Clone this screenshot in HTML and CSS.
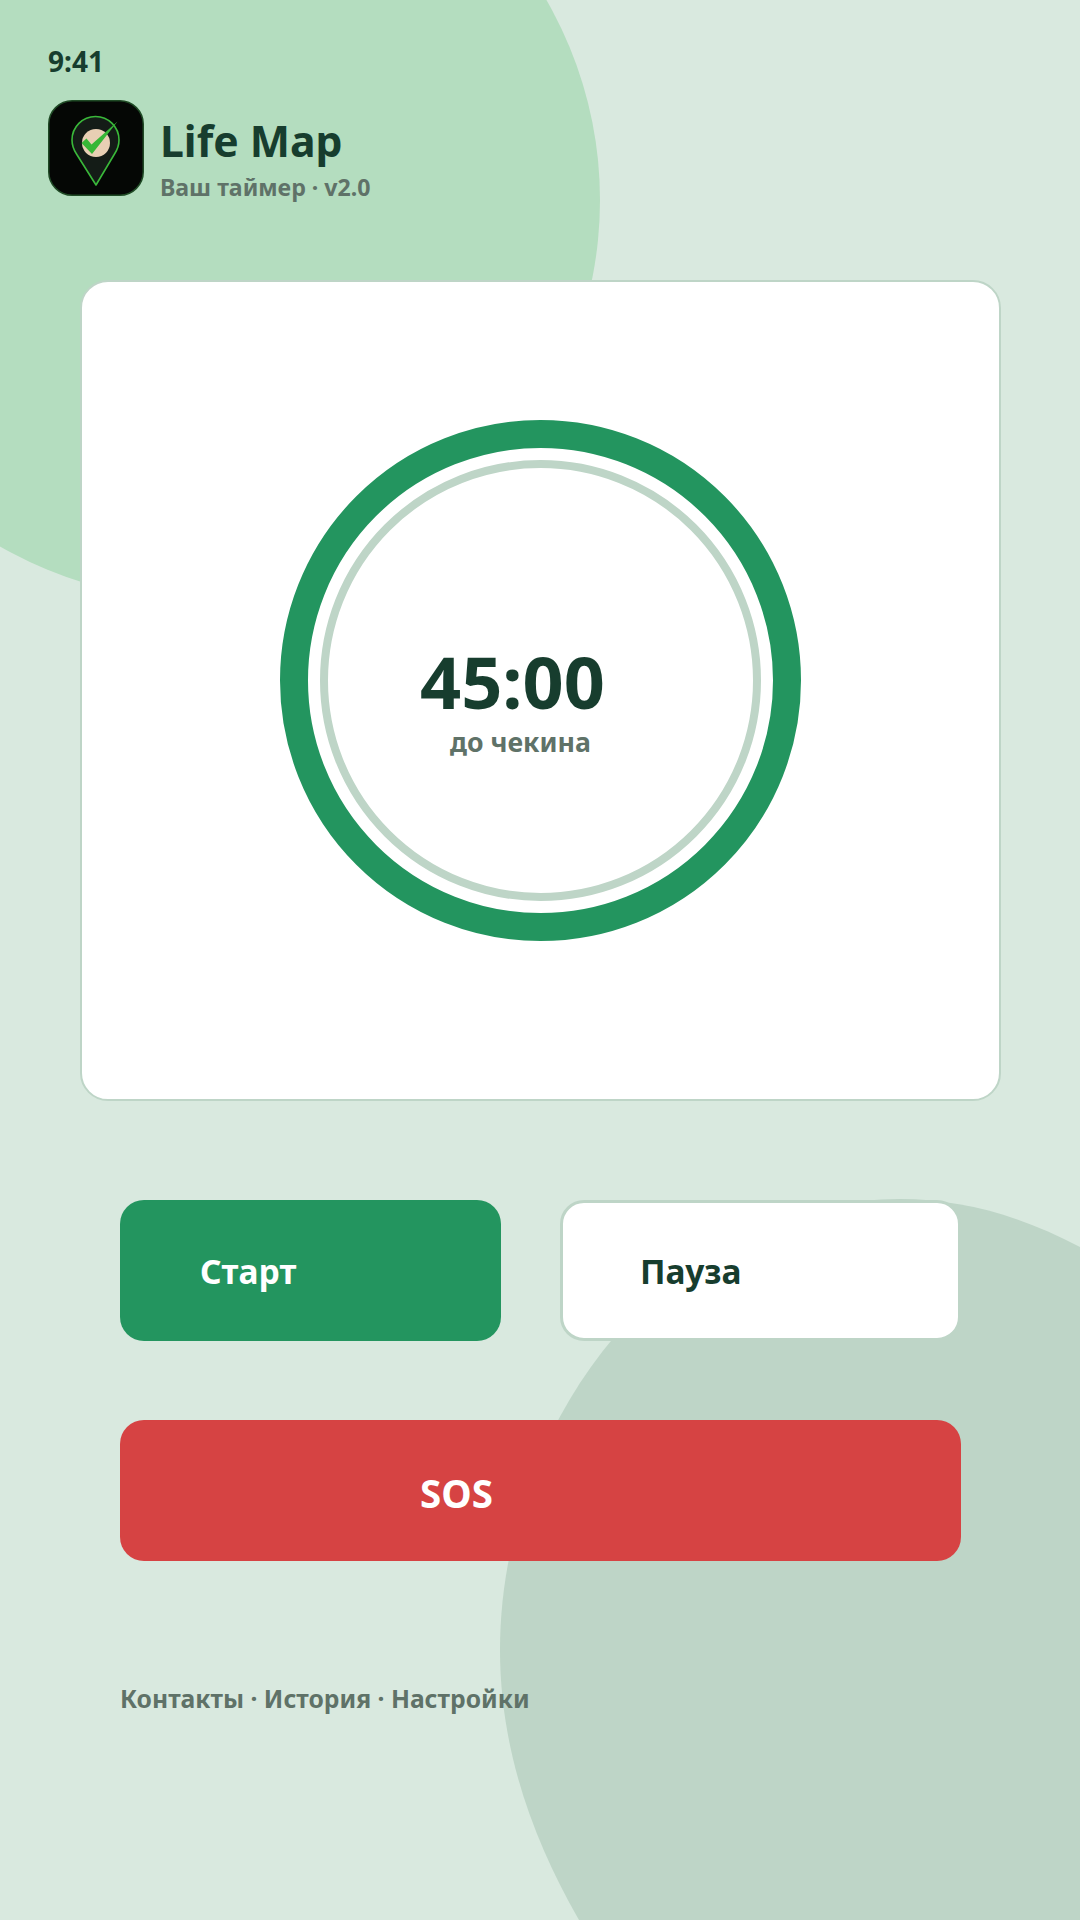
FILE: index.html
```html
<!DOCTYPE html>
<html lang="ru">
<head>
<meta charset="utf-8">
<title>Life Map</title>
<link rel="stylesheet" href="styles.css">
</head>
<body>
<main class="screen">
  <svg class="backdrop" width="1080" height="1920" viewBox="0 0 1080 1920" aria-hidden="true">
    <circle class="blob-top" cx="200" cy="200" r="400"/>
    <path class="blob-bottom" d="M579 1920C530 1835 500 1745 500 1650C500 1430 660 1199 900 1199C960 1199 1020 1215 1080 1247V1920Z"/>
  </svg>

  <div class="status">9:41</div>

  <header class="header">
    <svg class="logo" width="96" height="96" viewBox="0 0 96 96" aria-label="Life Map">
      <rect class="logo-bg" x="0.75" y="0.75" width="94.5" height="94.5" rx="23.5"/>
      <path class="logo-pin" d="M48 85L28.500 54C25.500 49.500 24 45 24 40C24 27 34.500 16.500 47.500 16.500C60.500 16.500 71 27 71 40C71 45 69.500 49.500 66.500 54Z"/>
      <circle class="logo-face" cx="48" cy="43" r="14"/>
      <path class="logo-check" d="M33.500 43L38.500 38.500L43.500 44.500L69.500 21.500L44 54Z"/>
    </svg>
    <div class="brand">
      <h1 class="brand-name">Life Map</h1>
      <p class="brand-sub">Ваш таймер · v2.0</p>
    </div>
  </header>

  <section class="card">
    <div class="dial">
      <svg class="ring" width="521" height="521" viewBox="0 0 521 521" aria-hidden="true">
        <circle class="ring-outer" cx="260.500" cy="260.500" r="246.500"/>
        <circle class="ring-inner" cx="260.500" cy="260.500" r="216.500"/>
      </svg>
      <div class="readout">
        <div class="time">45:00</div>
        <div class="caption">до чекина</div>
      </div>
    </div>
  </section>

  <div class="controls">
    <button class="btn btn-start" type="button">Старт</button>
    <button class="btn btn-pause" type="button">Пауза</button>
  </div>
  <button class="btn btn-sos" type="button">SOS</button>

  <nav class="footer">Контакты · История · Настройки</nav>
</main>
</body>
</html>
```

FILE: styles.css
```css
* { box-sizing: border-box; }

html, body {
  margin: 0;
  padding: 0;
}

body {
  width: 1080px;
  height: 1920px;
  overflow: hidden;
  background: #d9e9df;
  color: #173d2e;
  font-family: "Noto Sans", "Open Sans", sans-serif;
  font-weight: 700;
}

.screen {
  position: relative;
  width: 1080px;
  height: 1920px;
  overflow: hidden;
  display: flex;
  flex-direction: column;
  align-items: flex-start;
}

.backdrop {
  position: absolute;
  left: 0;
  top: 0;
}

.blob-top { fill: #b4ddbf; }
.blob-bottom { fill: #bed5c7; }

.status,
.header,
.card,
.controls,
.btn-sos,
.footer {
  position: relative;
}

.status {
  margin: 43px 0 0 48px;
  height: 37px;
  font-size: 28px;
  line-height: 37px;
}

.header {
  display: flex;
  align-items: flex-start;
  gap: 16px;
  margin: 20px 0 0 48px;
  height: 96px;
}

.logo { display: block; }
.logo-bg { fill: #050705; stroke: #1f4a25; stroke-width: 1.5; }
.logo-pin { fill: #141c17; stroke: #3ab83a; stroke-width: 1.6; stroke-linejoin: round; }
.logo-face { fill: #e8cfb4; }
.logo-check { fill: #37b737; }

.brand {
  padding-top: 15px;
}

.brand-name {
  margin: 0;
  font-size: 42.700px;
  line-height: 52px;
  font-weight: 700;
}

.brand-sub {
  margin: 5px 0 0;
  font-size: 23.150px;
  line-height: 30px;
  color: #5f7268;
}

.card {
  margin: 84px 0 0 80px;
  width: 921px;
  height: 821px;
  padding: 138px 0 0 198px;
  background: #fff;
  border: 2px solid #bed5c7;
  border-radius: 28px;
}

.dial {
  display: grid;
  width: 521px;
  height: 521px;
}

.ring {
  grid-area: 1 / 1;
  display: block;
}

.ring-outer { fill: none; stroke: #23955f; stroke-width: 28; }
.ring-inner { fill: none; stroke: #bed5c7; stroke-width: 8; }

.readout {
  grid-area: 1 / 1;
  padding: 217px 0 0 140px;
}

.time {
  font-size: 72px;
  line-height: 88px;
}

.caption {
  margin: 0 0 0 30px;
  font-size: 26.700px;
  line-height: 34px;
  color: #5f7268;
}

.btn {
  margin: 0;
  border: 0;
  height: 141px;
  border-radius: 24px;
  font-family: inherit;
  font-weight: 700;
  font-size: 33.500px;
  text-align: left;
  padding: 0 0 0 80px;
}

.controls {
  display: flex;
  gap: 59px;
  margin: 99px 0 0 120px;
}

.btn-start {
  width: 381px;
  background: #23955f;
  color: #fff;
}

.btn-pause {
  width: 401px;
  background: #fff;
  color: #173d2e;
  border: 3px solid #bed5c7;
  padding-left: 77px;
}

.btn-sos {
  margin: 79px 0 0 120px;
  width: 841px;
  padding: 5px 0 0 300px;
  font-size: 38.500px;
  background: #d64343;
  color: #fff;
}

.footer {
  margin: 121px 0 0 120px;
  font-size: 24.700px;
  line-height: 34px;
  color: #5f7268;
}
```
